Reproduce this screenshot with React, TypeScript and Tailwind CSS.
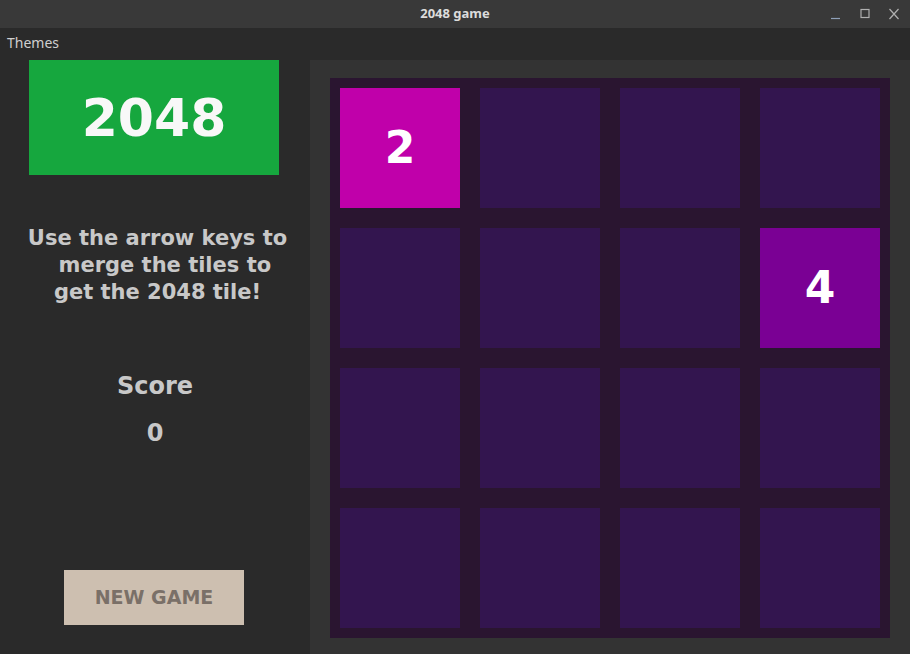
import React from 'react'

type Cell = number | null

const board: Cell[][] = [
  [2, null, null, null],
  [null, null, null, 4],
  [null, null, null, null],
  [null, null, null, null],
]

const tileClass = (v: Cell) => {
  if (v === 2) return 'bg-[#c000aa]'
  if (v === 4) return 'bg-[#7a0094]'
  return 'bg-[#33154f]'
}

const TitleBar: React.FC = () => (
  <div className="relative h-[28px] bg-[#393939] flex items-center justify-center">
    <span className="text-[13px] font-bold text-[#dcdcdc] font-['Noto_Sans',sans-serif]">2048 game</span>
    <div className="absolute right-0 top-0 h-full flex items-center gap-[17px] pr-[10px] text-[#a9a9a9]">
      <svg width="12" height="12" viewBox="0 0 12 12">
        <path d="M1 10.5 H10" stroke="#8fa0b8" strokeWidth="1.2" />
      </svg>
      <svg width="12" height="12" viewBox="0 0 12 12">
        <rect x="2" y="1.5" width="8" height="8" fill="none" stroke="#b0b0b0" strokeWidth="1.2" />
      </svg>
      <svg width="12" height="12" viewBox="0 0 12 12">
        <path d="M1.5 1 L10.5 11 M10.5 1 L1.5 11" stroke="#b0b0b0" strokeWidth="1.2" />
      </svg>
    </div>
  </div>
)

const App: React.FC = () => {
  return (
    <div className="w-[910px] h-[654px] bg-[#2a2a2a] flex flex-col overflow-hidden font-['DejaVu_Sans',sans-serif]">
      <TitleBar />
      <div className="h-[32px] flex items-start pt-[4px] px-[7px]">
        <span className="text-[14px] text-[#cfcfcf] font-['Noto_Sans',sans-serif]">Themes</span>
      </div>

      <div className="flex flex-1">
        {/* left side */}
        <div className="w-[310px] flex flex-col items-center">
          <div className="w-[250px] h-[115px] ml-[-2px] bg-[#16a73e] flex items-center justify-center">
            <span className="text-[52px] font-bold text-[#f8f8f8]">2048</span>
          </div>

          <p className="mt-[50px] ml-[5px] text-[21px] leading-[27px] font-bold text-[#c8c8c8] text-center whitespace-pre">
            {'Use the arrow keys to\n  merge the tiles to\nget the 2048 tile!'}
          </p>

          <div className="mt-[62px] text-[24px] font-bold text-[#c8c8c8]">Score</div>
          <div className="mt-[11px] text-[24px] font-bold text-[#c8c8c8]">0</div>

          <button className="mt-[119px] w-[180px] h-[55px] bg-[#cdbfb0] text-[19px] font-bold text-[#7a7068] ml-[-2px]">
            NEW GAME
          </button>
        </div>

        {/* board area */}
        <div className="flex-1 bg-[#333333] pl-[20px] pt-[18px]">
          <div className="w-[560px] h-[560px] bg-[#2a1530] p-[10px] grid grid-cols-4 gap-[20px]">
            {board.flat().map((v, i) => (
              <div key={i} className={`w-[120px] h-[120px] flex items-center justify-center ${tileClass(v)}`}>
                {v && <span className="text-[44px] font-bold text-white">{v}</span>}
              </div>
            ))}
          </div>
        </div>
      </div>
    </div>
  )
}

export default App
